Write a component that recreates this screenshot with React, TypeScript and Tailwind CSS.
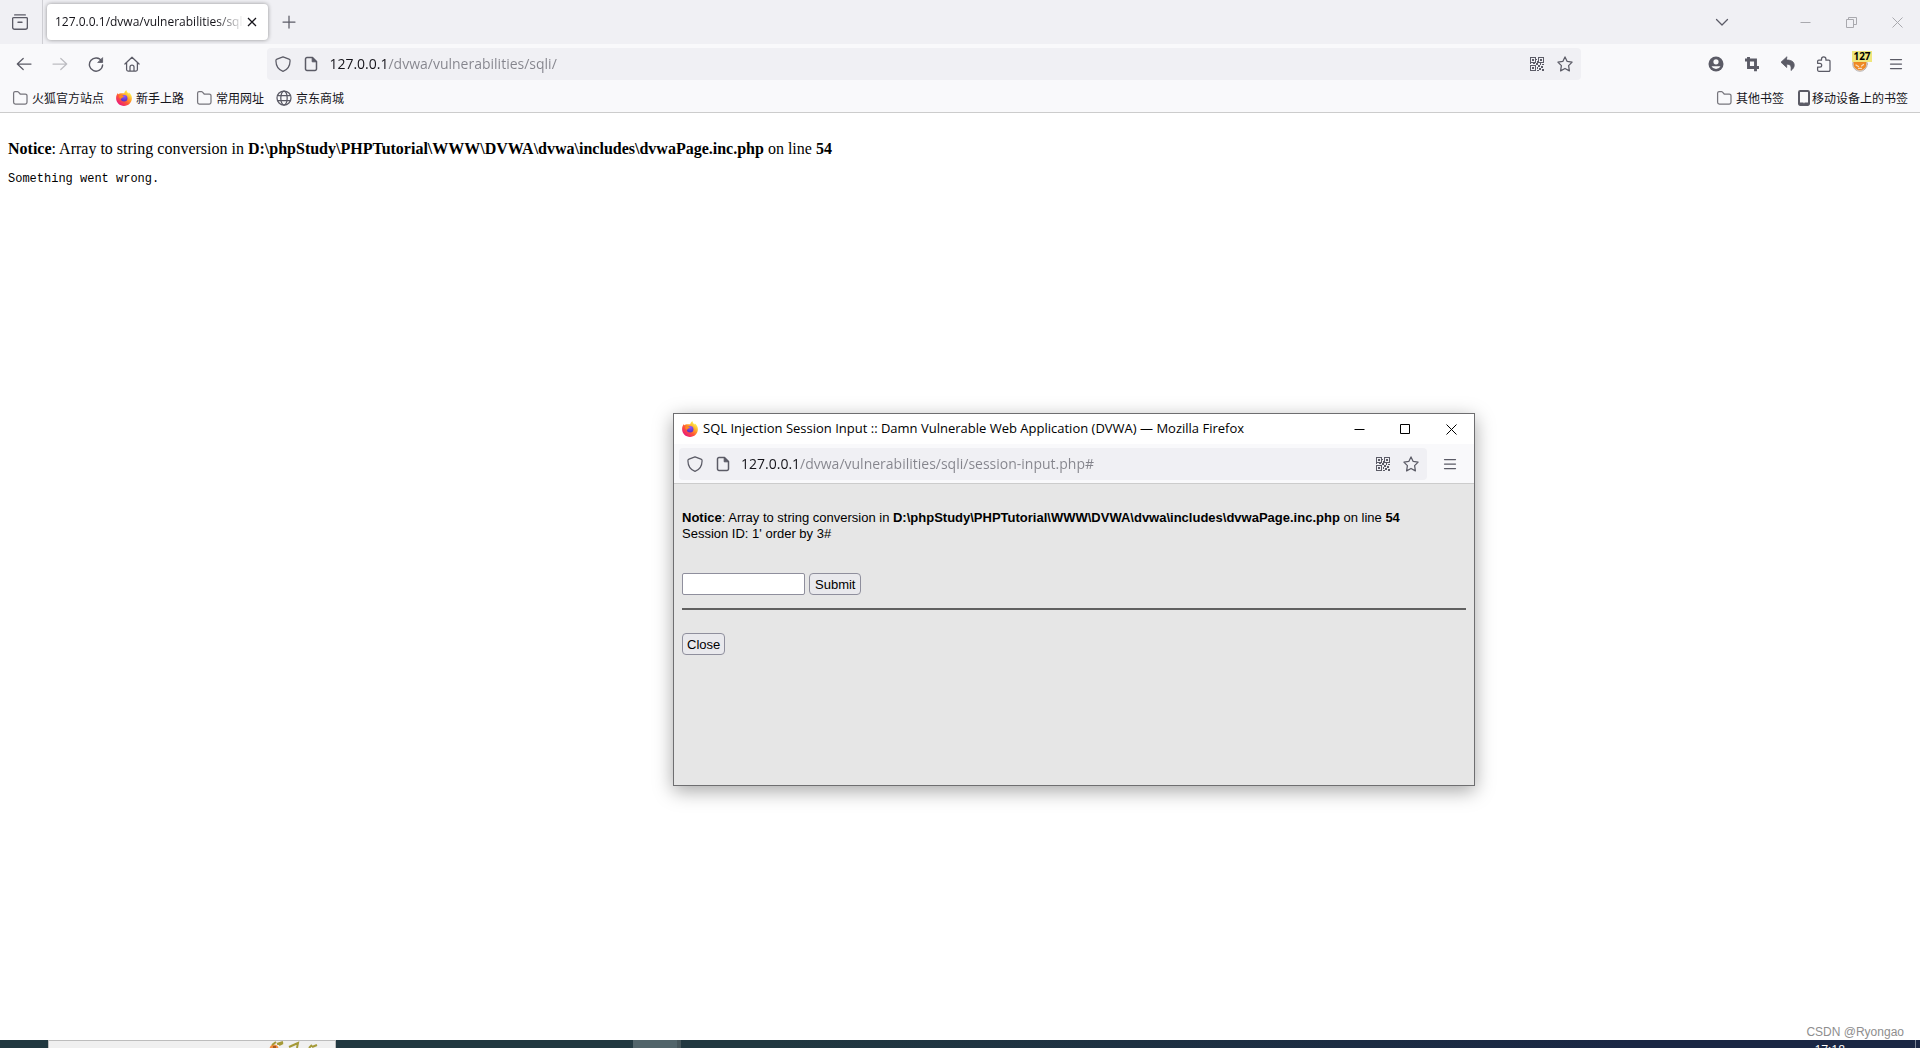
import type { ReactNode } from "react";

const UI = "font-['Open_Sans','Noto_Sans_CJK_SC',sans-serif]";

function Svg({ children, size = 16, className = "" }: { children: ReactNode; size?: number; className?: string }) {
  return (
    <svg
      width={size}
      height={size}
      viewBox={`0 0 ${size} ${size}`}
      fill="none"
      stroke="currentColor"
      strokeWidth="1.25"
      strokeLinecap="round"
      strokeLinejoin="round"
      className={`shrink-0 ${className}`}
      aria-hidden="true"
    >
      {children}
    </svg>
  );
}

const ArchiveIcon = () => (
  <Svg>
    <path d="M2.700 .9h10.600M1.600 3.600h12.800a1 1 0 0 1 1 1v8.700a2 2 0 0 1-2 2H2.600a2 2 0 0 1-2-2V4.600a1 1 0 0 1 1-1zM6 8.300h4" strokeWidth="1.400" />
  </Svg>
);
const BackIcon = () => (
  <Svg>
    <path d="M15 8H1.300M7.200 2.500L1.300 8l5.900 5.500" />
  </Svg>
);
const ForwardIcon = () => (
  <Svg>
    <path d="M1 8h13.700M8.800 2.500L14.700 8l-5.900 5.500" />
  </Svg>
);
const ReloadIcon = () => (
  <Svg>
    <path d="M13.700 5.200A6.600 6.600 0 1 0 14.600 9" strokeWidth="1.400" />
    <path d="M14.600 2v4.500h-4.500z" fill="currentColor" strokeWidth="0.800" />
  </Svg>
);
const HomeIcon = () => (
  <Svg>
    <path d="M.9 8L8 1.200 15.100 8M2.600 6.600v6.900a1.500 1.500 0 0 0 1.500 1.500h7.800a1.500 1.500 0 0 0 1.500-1.500V6.600M6 15v-4a2 2 0 0 1 4 0v4" />
  </Svg>
);
const ShieldIcon = () => (
  <Svg>
    <path d="M8 .8L14 3.200c.8.300 1.100.800 1.100 1.500C15 9.500 12.600 13.700 8 15.400 3.400 13.700 1 9.500.9 4.700c0-.7.3-1.200 1.100-1.500z" />
  </Svg>
);
const PageIcon = () => (
  <Svg>
    <path d="M4 1.600h5.500l4 4v7.300a1.500 1.500 0 0 1-1.500 1.500H4a1.500 1.500 0 0 1-1.500-1.500V3.100A1.500 1.500 0 0 1 4 1.600z" strokeWidth="1.500" />
    <path d="M9.200 1.600v4.200h4.200z" fill="currentColor" strokeWidth="1" />
  </Svg>
);
const QrIcon = () => (
  <Svg size={14}>
    <g stroke="none" fill="currentColor" shapeRendering="crispEdges">
      <path
        fillRule="evenodd"
        d="M0 0h6v6H0zM1 1v4h4V1zM8 0h6v6H8zM9 1v4h4V1zM0 8h6v6H0zM1 9v4h4V9z"
      />
      <path d="M2 2h2v2H2zM10 2h2v2h-2zM2 10h2v2H2zM6 2h1v1H6zM7 4h1v2H7zM6 6h2v2H6zM8 8h2v2H8zM10 6h1v2h-1zM12 7h2v1h-2zM11 9h2v2h-2zM9 11h2v2H9zM7 10h1v2H7zM12 12h2v2h-2zM7 13h2v1H7zM3 6h2v1H3zM0 6h1v1H0z" />
    </g>
  </Svg>
);
const StarIcon = () => (
  <Svg>
    <path d="M8 .9l2.200 4.500 4.900.7-3.500 3.500.8 5.300L8 12.500 3.600 14.900l.8-5.300L.9 6.100l4.900-.7z" />
  </Svg>
);
const AccountIcon = () => (
  <Svg>
    <circle cx="8" cy="8" r="7.500" fill="currentColor" stroke="none" />
    <circle cx="8" cy="5.800" r="2.600" fill="#f9f9fb" stroke="none" />
    <path d="M3.500 10.200h9a5 5 0 0 1-9 0z" fill="#f9f9fb" stroke="none" />
  </Svg>
);
const CropIcon = () => (
  <Svg>
    <path d="M1 4h10.500v8M4.500 1v10.500H15M11.500 11v4.200" strokeWidth="2.900" strokeLinecap="butt" strokeLinejoin="miter" />
  </Svg>
);
const UndoIcon = () => (
  <Svg>
    <path d="M6.700 1L1 6.200l5.700 5.300V8.200c3.500 0 5 1.500 4.300 6.300 2-1.500 3.500-3.500 3.200-6-.4-3-3-4.500-7.500-4.500z" fill="currentColor" strokeWidth="0.800" />
  </Svg>
);
const PuzzleIcon = () => (
  <Svg>
    <path d="M5.500 4.200V3a2.200 2.200 0 0 1 4.400 0v1.200h2.900a1.200 1.200 0 0 1 1.200 1.200v8.700a1.200 1.200 0 0 1-1.200 1.200H2.800a1.200 1.200 0 0 1-1.200-1.200v-3h2.200a1.900 1.900 0 0 0 0-3.800H1.600V5.400a1.200 1.200 0 0 1 1.200-1.200z" />
  </Svg>
);
const MenuIcon = () => (
  <Svg>
    <path d="M2.500 3.500h11M2.500 8h11M2.500 12.500h11" />
  </Svg>
);
const FolderIcon = () => (
  <Svg>
    <path d="M1.600 3v9.300a1.700 1.700 0 0 0 1.700 1.700h10a1.700 1.700 0 0 0 1.700-1.700V5.700A1.700 1.700 0 0 0 13.300 4H8.200L6.500 2.100A1.500 1.500 0 0 0 5.500 1.700H3.200A1.500 1.500 0 0 0 1.600 3z" stroke="#77767d" />
  </Svg>
);
const GlobeIcon = () => (
  <Svg>
    <circle cx="8" cy="8" r="7" />
    <ellipse cx="8" cy="8" rx="3.200" ry="7" />
    <path d="M1.600 5.500h12.800M1.600 10.500h12.800" />
  </Svg>
);
const PhoneIcon = () => (
  <Svg>
    <path d="M4.200 1h7.600A1.200 1.200 0 0 1 13 2.200v11.600a1.200 1.200 0 0 1-1.200 1.200H4.200A1.200 1.200 0 0 1 3 13.800V2.200A1.200 1.200 0 0 1 4.200 1zM3 13.500h4M9 13.500h4" strokeWidth="2" />
  </Svg>
);
const FirefoxIcon = ({ id }: { id: string }) => (
  <Svg>
    <defs>
      <linearGradient id={`${id}-body`} x1="14" y1="2" x2="3" y2="15" gradientUnits="userSpaceOnUse">
        <stop offset="0.050" stopColor="#fff44f" />
        <stop offset="0.350" stopColor="#ffa52a" />
        <stop offset="0.600" stopColor="#ff5a36" />
        <stop offset="1" stopColor="#e9147f" />
      </linearGradient>
      <radialGradient id={`${id}-core`} cx="8.500" cy="6" r="5" gradientUnits="userSpaceOnUse">
        <stop offset="0" stopColor="#9059ff" />
        <stop offset="1" stopColor="#5a32c8" />
      </radialGradient>
    </defs>
    <g stroke="none">
      <path
        d="M10.400 0c.2 1.500 1 2.500 2.200 3.500.3-.3.200-.8.100-1.200C14.800 4 15.900 6 15.900 8.300 15.900 12.600 12.400 16 8 16S.1 12.600.1 8.300C.1 6 .8 4.300 2 3.100c0 .5.100.9.400 1.200.9-.9 2-1.200 3.200-1C6 3.300 8 3.500 8.300 3.200 8.500 2 9.200.8 10.400 0z"
        fill={`url(#${id}-body)`}
      />
      <circle cx="8.100" cy="8.200" r="3.300" fill={`url(#${id}-core)`} />
      <path d="M3.200 5.700c1.500-1 3-.8 4.300.3.500.5.400 1-.3 1.200-.9.300-1.700.5-1.800 1.300 0 .5-.4.500-.8.300C3.600 8.200 3 7 3.200 5.700z" fill="#ff8a1e" />
    </g>
  </Svg>
);
const FoxIcon = () => (
  <Svg>
    <circle cx="8" cy="8" r="7.300" fill="#f3ece6" stroke="#a9a4a4" strokeWidth="0.800" />
    <path d="M1.800 4L5 6h6l3.200-2-.3 6.500c-1.200 2.200-3.400 3.600-5.900 3.600S3.300 12.700 2.100 10.500z" fill="#f08a24" stroke="#d9761c" strokeWidth="0.500" />
    <path d="M4 9l2.500 1.500M11.500 8.500l-2 1.500M6.500 12.300h3" stroke="#f7dcc0" strokeWidth="1.200" />
  </Svg>
);

function IconButton({ label, children, className = "" }: { label: string; children: ReactNode; className?: string }) {
  return (
    <button type="button" aria-label={label} className={`relative flex size-8 shrink-0 items-center justify-center rounded ${className}`}>
      {children}
    </button>
  );
}

function CaptionButton({ label, children }: { label: string; children: ReactNode }) {
  return (
    <button type="button" aria-label={label} className="flex h-full w-[46px] items-center justify-center">
      <svg width="11" height="11" viewBox="0 0 11 11" fill="none" stroke="currentColor" aria-hidden="true">
        {children}
      </svg>
    </button>
  );
}

function AddressBar({ url }: { url: string }) {
  return (
    <div className="flex h-8 min-w-0 flex-[11] items-center rounded bg-[#f0f0f4] text-[#5b5b66]">
      <button type="button" aria-label="Tracking protection" className="ml-2"><ShieldIcon /></button>
      <button type="button" aria-label="Site information" className="ml-3"><PageIcon /></button>
      <input
        type="text"
        aria-label="Address"
        defaultValue={url}
        className="ml-2.5 h-5 min-w-0 flex-1 bg-[linear-gradient(90deg,#15141a_59px,#84848c_59px)] bg-clip-text text-sm leading-5 text-transparent outline-none"
      />
      <button type="button" aria-label="QR code"><QrIcon /></button>
      <button type="button" aria-label="Bookmark this page" className="mr-2 ml-[13px]"><StarIcon /></button>
    </div>
  );
}

function Bookmark({ icon, label, tight = false }: { icon: ReactNode; label: string; tight?: boolean }) {
  return (
    <a href="#" className={`flex items-center ${tight ? "gap-0" : "gap-1"}`}>
      <span className="text-[#5b5b66]">{icon}</span>
      {label}
    </a>
  );
}

function NoticeLine() {
  return (
    <>
      <b>Notice</b>: Array to string conversion in <b>D:\phpStudy\PHPTutorial\WWW\DVWA\dvwa\includes\dvwaPage.inc.php</b> on line <b>54</b>
    </>
  );
}

function SessionPopup() {
  return (
    <section
      aria-label="SQL Injection Session Input"
      className="absolute top-[413px] left-[673px] flex h-[373px] w-[802px] flex-col border border-[#6e6e70] bg-[#e6e6e6] shadow-[0_5px_18px_rgba(0,0,0,0.35)]"
    >
      <header className="flex h-[30px] shrink-0 items-center bg-white pl-2 text-black">
        <FirefoxIcon id="popup-logo" />
        <h1 className="ml-[5px] flex-1 truncate pb-0.5 text-[13px] leading-5">
          SQL Injection Session Input :: Damn Vulnerable Web Application (DVWA) — Mozilla Firefox
        </h1>
        <CaptionButton label="Minimize"><path d="M.5 5.500h10" /></CaptionButton>
        <CaptionButton label="Maximize"><path d="M.5 .5h9v9h-9z" /></CaptionButton>
        <CaptionButton label="Close window"><path d="M.5 .5l10 10M10.500 .5l-10 10" /></CaptionButton>
      </header>
      <div className="flex h-10 shrink-0 items-center gap-[7px] border-b border-[#cccccc] bg-[#f9f9fb] pr-2 pl-[5px] text-[#5b5b66]">
        <AddressBar url="127.0.0.1/dvwa/vulnerabilities/sqli/session-input.php#" />
        <IconButton label="Menu"><MenuIcon /></IconButton>
      </div>
      <div className="px-2 pt-[26px] font-['Liberation_Sans',sans-serif] text-[13px] leading-4 text-black">
        <p className="whitespace-nowrap"><NoticeLine /></p>
        <p>Session ID: 1' order by 3#</p>
        <form className="mt-[31px] flex gap-1" onSubmit={(e) => e.preventDefault()}>
          <input type="text" aria-label="Session ID" className="h-[22px] w-[123px] rounded-xs border border-[#8f8f9d] bg-white px-1" />
          <button type="submit" className="h-[22px] rounded border border-[#8f8f9d] bg-[#e9e9ed] px-[5px] pt-px">Submit</button>
        </form>
        <hr className="mt-[13px] h-0.5 border-0 bg-[#606060]" />
        <button type="button" className="mt-[23px] h-[22px] rounded border border-[#8f8f9d] bg-[#e9e9ed] px-1 pt-px">Close</button>
      </div>
    </section>
  );
}

export default function App() {
  return (
    <div className={`relative flex h-screen flex-col overflow-hidden bg-white text-[#15141a] ${UI}`}>
      <header className="flex h-11 shrink-0 items-center bg-[#f0f0f4] text-[#5b5b66]">
        <div className="flex h-full w-[43px] items-center border-r border-[#cfcfd4] pl-1">
          <IconButton label="Recent browsing"><ArchiveIcon /></IconButton>
        </div>
        <div className="ml-1 flex h-9 w-[221px] items-center rounded bg-white pl-2 text-[#15141a] shadow-[0_0_4px_rgba(0,0,0,0.4)]">
          <span className="flex-1 overflow-hidden mask-r-from-85% text-xs leading-5 whitespace-nowrap">127.0.0.1/dvwa/vulnerabilities/sqli/</span>
          <button type="button" aria-label="Close tab" className="mr-2 flex size-4 items-center justify-center">
            <Svg><path d="M4 4l8 8M12 4l-8 8" strokeLinecap="butt" /></Svg>
          </button>
        </div>
        <IconButton label="New tab" className="ml-[5px]">
          <Svg><path d="M8 2v12M2 8h12" /></Svg>
        </IconButton>
        <div className="flex-1" />
        <IconButton label="List all tabs" className="mr-11">
          <Svg><path d="M2.500 5.500L8 11l5.500-5.500" /></Svg>
        </IconButton>
        <div className="flex h-full text-[#a9a9ae]">
          <CaptionButton label="Minimize"><path d="M.5 5.500h10" /></CaptionButton>
          <CaptionButton label="Restore"><path d="M.5 2.500h7v8h-7zM2.500 2.500v-2h8v7h-3" /></CaptionButton>
          <CaptionButton label="Close window"><path d="M.5 .5l10 10M10.500 .5l-10 10" /></CaptionButton>
        </div>
      </header>

      <nav className="flex h-10 shrink-0 items-center bg-[#f9f9fb] px-2 text-[#5b5b66]">
        <div className="flex gap-1">
          <IconButton label="Back"><BackIcon /></IconButton>
          <IconButton label="Forward" className="text-[#bdbdc2]"><ForwardIcon /></IconButton>
          <IconButton label="Reload"><ReloadIcon /></IconButton>
          <IconButton label="Home"><HomeIcon /></IconButton>
        </div>
        <div className="flex-1" />
        <AddressBar url="127.0.0.1/dvwa/vulnerabilities/sqli/" />
        <div className="flex-1" />
        <div className="flex gap-1">
          <IconButton label="Account"><AccountIcon /></IconButton>
          <IconButton label="Screenshot"><CropIcon /></IconButton>
          <IconButton label="Undo"><UndoIcon /></IconButton>
          <IconButton label="Extensions"><PuzzleIcon /></IconButton>
          <IconButton label="Proxy">
            <FoxIcon />
            <span className="absolute top-[3px] right-1 h-[11px] w-5 bg-[#f0e67c] text-center font-['Open_Sans',sans-serif] text-[10px] leading-[11px] font-bold text-black">127</span>
          </IconButton>
          <IconButton label="Menu"><MenuIcon /></IconButton>
        </div>
      </nav>

      <div className="flex h-[29px] shrink-0 items-center justify-between border-b border-[#cccccc] bg-[#f9f9fb] px-3 font-['Noto_Sans_CJK_SC',sans-serif] text-xs">
        <div className="flex gap-3">
          <Bookmark icon={<FolderIcon />} label="火狐官方站点" />
          <Bookmark icon={<FirefoxIcon id="bookmark-logo" />} label="新手上路" />
          <Bookmark icon={<FolderIcon />} label="常用网址" />
          <Bookmark icon={<GlobeIcon />} label="京东商城" />
        </div>
        <div className="flex gap-3">
          <Bookmark icon={<FolderIcon />} label="其他书签" />
          <Bookmark icon={<PhoneIcon />} label="移动设备上的书签" tight />
        </div>
      </div>

      <main className="flex flex-1 flex-col px-2 pt-[27px] font-['Liberation_Serif',serif] text-base leading-[18px] text-black">
        <p><NoticeLine /></p>
        <pre className="mt-[13px] font-['Liberation_Mono',monospace] text-xs leading-4">Something went wrong.</pre>
        <p className="mt-auto mr-2 text-right font-['Liberation_Sans',sans-serif] text-xs leading-4 text-[#8e8e8e]">CSDN @Ryongao</p>
      </main>

      <footer className="flex h-2 shrink-0 overflow-hidden bg-linear-to-r from-[#213840] from-40% to-[#1a2744] to-85%">
        <div className="ml-12 flex h-2 w-72 justify-end border border-b-0 border-[#bdbdbd] bg-[#f0f0f0] pr-3">
          <svg width="56" height="7" viewBox="0 0 56 7" fill="none" aria-hidden="true">
            <circle cx="7" cy="8" r="4.500" fill="#f28c3c" />
            <path d="M5 4l4-3M10 3l6-2M12 4l4-2M22 6l9-4-1 5M42 7l3-3M45 6l5-2" stroke="#a59a38" strokeWidth="2" />
            <path d="M6 6h3" stroke="#5a2a10" />
          </svg>
        </div>
        <div className="ml-[297px] h-2 w-12 border-r-4 border-[#45555a] bg-[#51646a]" />
        <time className="mt-1 mr-[70px] ml-auto text-xs leading-3 text-white">17:18</time>
        <div className="mr-1 h-2 w-px bg-[#7c8596]" />
      </footer>

      <SessionPopup />
    </div>
  );
}
